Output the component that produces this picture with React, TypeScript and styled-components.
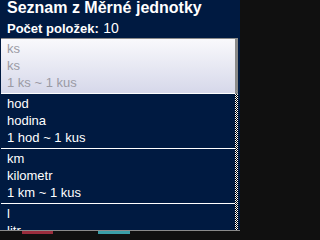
import styled, { createGlobalStyle } from "styled-components";

const units = [
  { code: "ks", name: "ks", ratio: "1 ks ~ 1 kus" },
  { code: "hod", name: "hodina", ratio: "1 hod ~ 1 kus" },
  { code: "km", name: "kilometr", ratio: "1 km ~ 1 kus" },
  { code: "l", name: "litr", ratio: "1 l ~ 1 kus" },
];

const App = () => {
  return (
    <>
      <GlobalStyle />
      <Panel>
        <Header>
          <Title>Seznam z Měrné jednotky</Title>
          <Count>
            <CountLabel>Počet položek:</CountLabel> <CountValue>10</CountValue>
          </Count>
        </Header>
        <Body>
          <List>
            {units.map((unit, index) => (
              <Item key={unit.code} $selected={index === 0}>
                <Line>{unit.code}</Line>
                <Line>{unit.name}</Line>
                <Line>{unit.ratio}</Line>
              </Item>
            ))}
          </List>
          <ScrollTrack>
            <ScrollThumb />
          </ScrollTrack>
        </Body>
      </Panel>
      <Footer>
        <FooterBlock $color="#9b2d3c" $width={31} />
        <FooterBlock $color="#3a9ea6" $width={32} />
      </Footer>
    </>
  );
};

export default App;

const GlobalStyle = createGlobalStyle`
  html, body {
    margin: 0;
    padding: 0;
    background: #101010;
  }
  body {
    font-family: "Liberation Sans", Arial, sans-serif;
  }
`;

const Panel = styled.div`
  width: 240px;
  height: 230px;
  background: #001a41;
  border-bottom: 1px solid #8a8a8a;
  overflow: hidden;
  display: flex;
  flex-direction: column;
`;

const Header = styled.div`
  padding: 0 0 0 7px;
  height: 38px;
  color: #ffffff;
  box-sizing: border-box;
`;

const Title = styled.div`
  font-size: 16px;
  font-weight: 700;
  line-height: 19px;
  margin-top: -2px;
`;

const Count = styled.div`
  margin-top: 2px;
  line-height: 17px;
`;

const CountLabel = styled.span`
  font-size: 13px;
  font-weight: 700;
`;

const CountValue = styled.span`
  font-size: 14px;
`;

const Body = styled.div`
  flex: 1;
  display: flex;
  min-height: 0;
  padding-right: 2px;
`;

const List = styled.div`
  flex: 1;
  margin-left: 1px;
  border-top: 1px solid #8a8a8a;
  overflow: hidden;
`;

const Item = styled.div<{ $selected?: boolean }>`
  padding: 1px 0 2px 6px;
  border-bottom: 1px solid #ffffff;
  font-size: 13px;
  line-height: 17px;
  color: ${(p) => (p.$selected ? "#9a9aa4" : "#ffffff")};
  background: ${(p) =>
    p.$selected
      ? "linear-gradient(to bottom, #f9f9fc 0%, #d6d8ea 100%)"
      : "#001a41"};
`;

const Line = styled.div`
  white-space: nowrap;
`;

const ScrollTrack = styled.div`
  width: 3px;
  background: repeating-conic-gradient(#000000 0 25%, #ffffff 0 50%) 0 0 /
    2px 2px;
`;

const ScrollThumb = styled.div`
  height: 56px;
  background: #8a8a8a;
`;

const Footer = styled.div`
  height: 3px;
  display: flex;
  gap: 45px;
  padding-left: 22px;
  background: #101010;
`;

const FooterBlock = styled.div<{ $color: string; $width: number }>`
  width: ${(p) => p.$width}px;
  background: ${(p) => p.$color};
`;
